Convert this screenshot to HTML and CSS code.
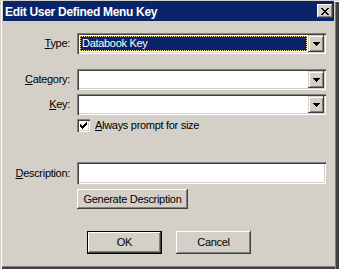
FILE: index.html
```html
<!DOCTYPE html>
<html lang="en">
<head>
  <meta charset="UTF-8" />
  <title>Edit User Defined Menu Key</title>
  <link rel="stylesheet" href="styles.css">
</head>
<body>
  <div class="window">
    <div class="titlebar">
      <span class="title">Edit User Defined Menu Key</span>
      <span class="close">
        <svg width="8" height="7" viewBox="0 0 8 7" shape-rendering="crispEdges">
          <path fill="#000" d="M0 0h2v1h-2z M6 0h2v1h-2z M1 1h2v1h-2z M5 1h2v1h-2z M2 2h4v1h-4z M3 3h2v1h-2z M2 4h4v1h-4z M1 5h2v1h-2z M5 5h2v1h-2z M0 6h2v1h-2z M6 6h2v1h-2z"/>
        </svg>
      </span>
    </div>

    <div class="content">
      <div class="row row-type">
        <span class="lbl"><u>T</u>ype:</span>
        <div class="field combo">
          <div class="combo-value"><span class="sel">Databook Key</span></div>
          <span class="drop">
            <svg width="7" height="4" viewBox="0 0 7 4" shape-rendering="crispEdges"><path fill="#000" d="M0 0h7v1h-7z M1 1h5v1h-5z M2 2h3v1h-3z M3 3h1v1h-1z"/></svg>
          </span>
        </div>
      </div>

      <div class="row row-category">
        <span class="lbl"><u>C</u>ategory:</span>
        <div class="field combo">
          <div class="combo-value"></div>
          <span class="drop">
            <svg width="7" height="4" viewBox="0 0 7 4" shape-rendering="crispEdges"><path fill="#000" d="M0 0h7v1h-7z M1 1h5v1h-5z M2 2h3v1h-3z M3 3h1v1h-1z"/></svg>
          </span>
        </div>
      </div>

      <div class="row row-key">
        <span class="lbl"><u>K</u>ey:</span>
        <div class="field combo">
          <div class="combo-value"></div>
          <span class="drop">
            <svg width="7" height="4" viewBox="0 0 7 4" shape-rendering="crispEdges"><path fill="#000" d="M0 0h7v1h-7z M1 1h5v1h-5z M2 2h3v1h-3z M3 3h1v1h-1z"/></svg>
          </span>
        </div>
      </div>

      <div class="row row-check">
        <span class="lbl"></span>
        <span class="checkbox">
          <svg width="7" height="7" viewBox="0 0 7 7" shape-rendering="crispEdges"><path fill="#000" d="M6 0h1v1h-1z M5 1h2v1h-2z M0 2h1v1h-1z M4 2h3v1h-3z M0 3h2v1h-2z M3 3h3v1h-3z M0 4h5v1h-5z M1 5h3v1h-3z M2 6h1v1h-1z"/></svg>
        </span>
        <span class="check-label"><u>A</u>lways prompt for size</span>
      </div>

      <div class="row row-desc">
        <span class="lbl"><u>D</u>escription:</span>
        <div class="field textbox"></div>
      </div>

      <div class="row row-gen">
        <span class="lbl"></span>
        <button class="btn btn-gen">Generate Description</button>
      </div>

      <div class="actions">
        <button class="btn btn-default">OK</button>
        <button class="btn">Cancel</button>
      </div>
    </div>
  </div>
</body>
</html>
```

FILE: styles.css
```css
* {
  box-sizing: border-box;
}

html, body {
  margin: 0;
  background: #d4d0c8;
}

body {
  font-family: "Liberation Sans", Arial, sans-serif;
  font-size: 11px;
  letter-spacing: -0.3px;
  color: #000;
}

.window {
  width: 339px;
  height: 269px;
  padding: 1px 5px 3px 3px;
  background: #d4d0c8;
  box-shadow:
    inset 1px 1px #d4d0c8,
    inset 2px 2px #fff,
    inset -3px 0 #404040,
    inset -4px 0 #808080,
    inset 0 -2px #404040,
    inset 0 -3px #808080;
}

.titlebar {
  height: 20px;
  background: #0a246a;
  display: flex;
  align-items: center;
  justify-content: space-between;
  padding: 1px 1px 0 2px;
}

.title {
  color: #fff;
  font-weight: bold;
  font-size: 12px;
  letter-spacing: -0.3px;
  line-height: 14px;
}

.close {
  width: 16px;
  height: 14px;
  margin-top: -1px;
  background: #d4d0c8;
  display: flex;
  align-items: center;
  justify-content: center;
  box-shadow:
    inset -1px -1px #404040,
    inset 1px 1px #fff,
    inset -2px -2px #808080;
}

.close svg, .drop svg, .checkbox svg {
  display: block;
}

.content {
  padding-top: 12px;
}

.row {
  display: flex;
  align-items: center;
  line-height: 13px;
}

.lbl {
  width: 67px;
  margin-right: 7px;
  text-align: right;
  flex-shrink: 0;
}

.field {
  width: 249px;
  background: #fff;
  padding: 2px;
  box-shadow:
    inset 1px 1px #808080,
    inset 2px 2px #404040,
    inset -1px -1px #fff,
    inset -2px -2px #d4d0c8;
}

.combo {
  height: 21px;
  display: flex;
}

.combo-value {
  flex: 1;
  padding: 1px;
}

.sel {
  display: block;
  height: 15px;
  background: #0a246a;
  color: #fff;
  border: 1px dotted #f5db95;
  padding-left: 1px;
  line-height: 13px;
}

.drop {
  width: 16px;
  height: 17px;
  background: #d4d0c8;
  display: flex;
  align-items: center;
  justify-content: center;
  box-shadow:
    inset -1px -1px #404040,
    inset 1px 1px #d4d0c8,
    inset 2px 2px #fff,
    inset -2px -2px #808080;
}

.row-category { margin-top: 15px; }
.row-key { margin-top: 4px; }
.row-check { margin-top: 4px; }
.row-desc { margin-top: 30px; }
.row-gen { margin-top: 5px; }

.checkbox {
  width: 13px;
  height: 13px;
  background: #fff;
  display: flex;
  align-items: center;
  justify-content: center;
  box-shadow:
    inset 1px 1px #808080,
    inset 2px 2px #404040,
    inset -1px -1px #fff,
    inset -2px -2px #d4d0c8;
}

.check-label {
  margin-left: 5px;
  margin-top: -1px;
}

.textbox {
  height: 22px;
}

.btn {
  font-family: inherit;
  font-size: 11px;
  letter-spacing: -0.3px;
  color: #000;
  background: #d4d0c8;
  border: none;
  margin: 0;
  padding: 0;
  height: 23px;
  width: 75px;
  line-height: 13px;
  box-shadow:
    inset -1px -1px #404040,
    inset 1px 1px #fff,
    inset -2px -2px #808080;
}

.btn-gen {
  width: 111px;
  height: 20px;
}

.btn-default {
  box-shadow:
    inset 0 0 0 1px #000,
    inset -2px -2px #404040,
    inset 2px 2px #fff,
    inset -3px -3px #808080;
}

.actions {
  display: flex;
  justify-content: center;
  gap: 14px;
  margin-top: 22px;
  padding-left: 1px;
}
```
